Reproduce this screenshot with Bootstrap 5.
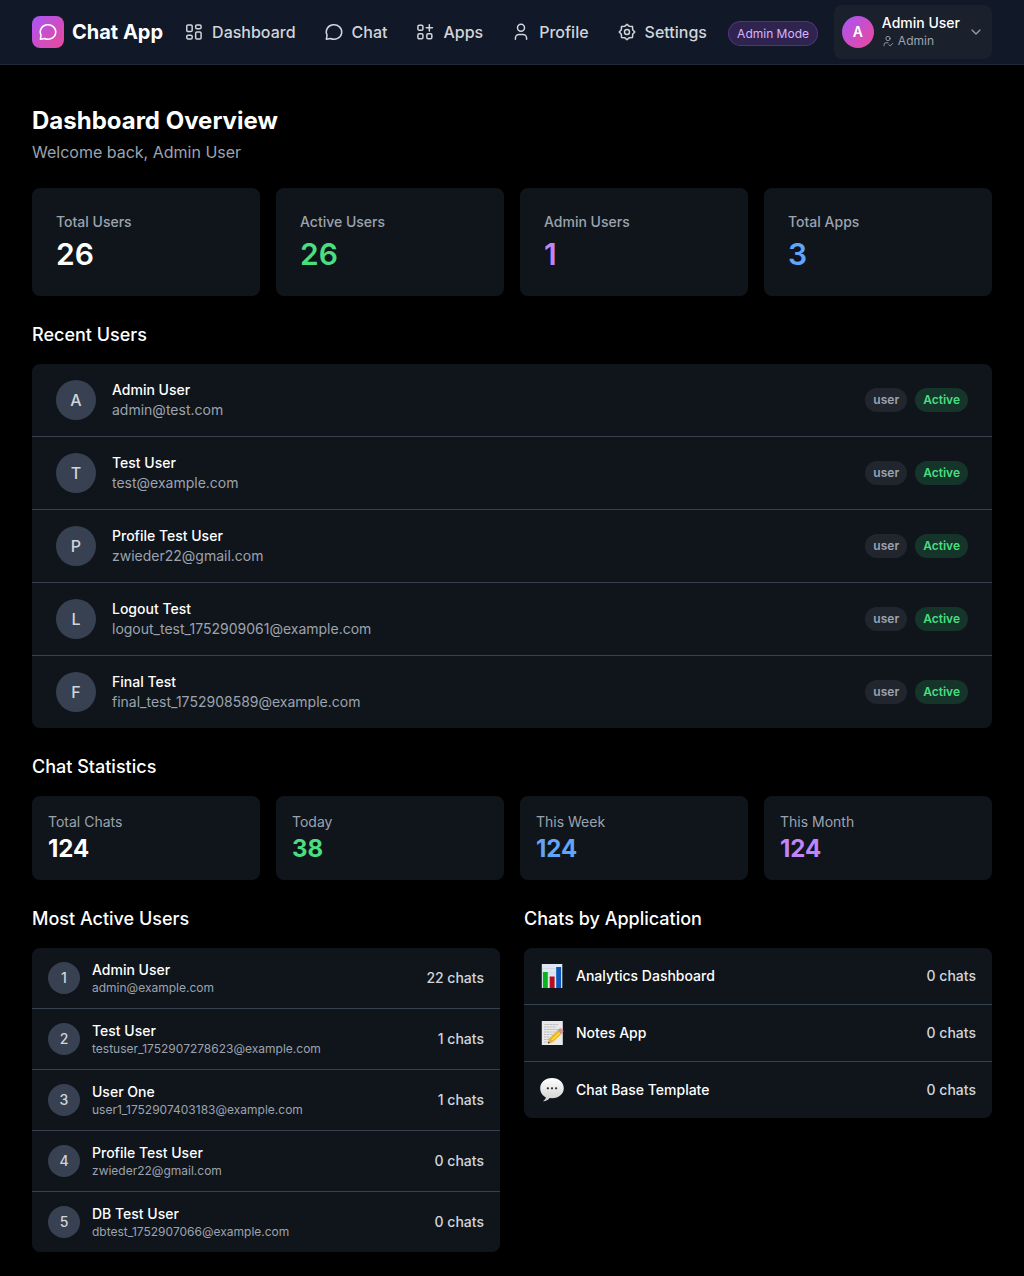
<!DOCTYPE html>
<html lang="en" data-bs-theme="dark">
<head>
<meta charset="utf-8">
<meta name="viewport" content="width=device-width, initial-scale=1">
<title>Chat App – Dashboard</title>
<link href="https://cdn.jsdelivr.net/npm/bootstrap@5.3.0/dist/css/bootstrap.min.css" rel="stylesheet">
<style>
body{background:#000;font-family:Inter,"Liberation Sans",sans-serif;color:#fff;font-size:16px;line-height:24px}
.topbar{background:#111827;border-bottom:1px solid #1f2937;height:65px}
.logo-box{width:32px;height:32px;border-radius:8px;background:linear-gradient(135deg,#a855f7,#ec4899)}
.brand-text{font-size:20px;line-height:28px;font-weight:700}
.main-nav{margin-left:9px;gap:4px}
.main-nav .nav-link{padding:8px 12px;gap:8px;color:#d1d5db;font-weight:500}
svg{flex:none;display:block}
.ico{fill:none;stroke:currentColor;stroke-width:1.8;stroke-linecap:round;stroke-linejoin:round}
.mode-pill{font-size:12px;line-height:17px;padding:3px 8px;border:1px solid rgba(168,85,247,.3);background:rgba(168,85,247,.2);color:#d8b4fe;border-radius:20px;margin-top:2px}
.user-btn{background:#1a202c;border-radius:8px;padding:8px;width:158px;height:54px;gap:8px}
.user-name{padding-bottom:2px}
.avatar-top{width:32px;height:32px;background:linear-gradient(135deg,#a855f7,#ec4899);font-size:14px;font-weight:600}
.t14{font-size:14px;line-height:20px}
.t12{font-size:12px;line-height:16px}
.dim{color:#9ca3af}
.soft{color:#d1d5db}
.page{padding:40px 32px 24px}
.page-title{font-size:24px;line-height:32px;font-weight:700;margin:0 0 3px}
.sec-title{font-size:18px;line-height:28px;font-weight:500;margin:0 0 15px;padding-top:1px}
.panel{background:#10151b;border-radius:8px}
.big-num{font-size:30px;line-height:36px;font-weight:600;margin-top:4px}
.mid-num{font-size:24px;line-height:31px;padding-top:1px;font-weight:700}
.c-green{color:#4ade80}.c-purple{color:#c084fc}.c-blue{color:#60a5fa}
.rows>*+*{border-top:1px solid #374151}
.row-lg{padding:16px 24px;gap:16px}
.row-sm{padding:12px 16px;gap:12px}
.disc{background:#374151;color:#d1d5db;flex:none;font-weight:500}
.disc-lg{width:40px;height:40px}
.disc-sm{width:32px;height:32px}
.tag{font-size:12px;line-height:16px;font-weight:600;padding:4px 8px;border-radius:12px}
.tag-user{background:#21262e;color:#9ca3af}
.tag-on{background:#15342a;color:#4ade80}
.mt-sec{margin-top:24px}
</style>
<script src="https://cdn.jsdelivr.net/npm/bootstrap@5.3.0/dist/js/bootstrap.bundle.min.js"></script>
</head>
<body>
<header class="topbar d-flex align-items-center px-4">
  <div class="d-flex align-items-center w-100 px-2">
    <div class="d-flex align-items-center gap-2">
      <span class="logo-box d-flex align-items-center justify-content-center">
        <svg class="ico" width="20" height="20" viewBox="0 0 24 24"><path d="M2.800 20.600l.9-4.700A9.300 8.700 0 1 1 7.900 19.800z"/></svg>
      </span>
      <span class="brand-text text-nowrap">Chat App</span>
    </div>
    <nav class="nav main-nav flex-nowrap">
      <a class="nav-link d-flex align-items-center" href="#"><svg class="ico" width="20" height="20" viewBox="0 0 24 24"><rect x="3.300" y="3.500" width="6.500" height="8" rx="1.500"/><rect x="14" y="3.500" width="6.500" height="4.500" rx="1.500"/><rect x="14" y="12" width="6.500" height="8.300" rx="1.500"/><rect x="3.300" y="15.800" width="6.500" height="4.500" rx="1.500"/></svg>Dashboard</a>
      <a class="nav-link d-flex align-items-center" href="#"><svg class="ico" width="20" height="20" viewBox="0 0 24 24"><path d="M2.800 20.600l.9-4.700A9.300 8.700 0 1 1 7.900 19.800z"/></svg>Chat</a>
      <a class="nav-link d-flex align-items-center" href="#"><svg class="ico" width="20" height="20" viewBox="0 0 24 24"><rect x="3.500" y="3.800" width="6" height="6" rx="1.500"/><rect x="3.500" y="14.200" width="6" height="6" rx="1.500"/><rect x="14.200" y="14.200" width="6" height="6" rx="1.500"/><path d="M17.200 3.300v7.400M13.500 7h7.400"/></svg>Apps</a>
      <a class="nav-link d-flex align-items-center" href="#"><svg class="ico" width="20" height="20" viewBox="0 0 24 24"><circle cx="12" cy="6.800" r="4.200"/><path d="M5.300 20.800v-1.500a4.300 4.300 0 0 1 4.300-4.300h4.800a4.300 4.300 0 0 1 4.300 4.300v1.500"/></svg>Profile</a>
      <a class="nav-link d-flex align-items-center" href="#"><svg class="ico" width="20" height="20" viewBox="0 0 24 24"><path d="M12 2.700L14.800 5.200L18.600 5.400L18.800 9.200L21.300 12L18.800 14.800L18.600 18.600L14.800 18.800L12 21.300L9.200 18.800L5.400 18.600L5.200 14.800L2.700 12L5.200 9.200L5.400 5.400L9.200 5.200z"/><circle cx="12" cy="12" r="3"/></svg>Settings</a>
    </nav>
    <div class="d-flex align-items-center gap-3 ms-auto">
      <span class="mode-pill text-nowrap">Admin Mode</span>
      <div class="user-btn d-flex align-items-center">
        <span class="avatar-top rounded-circle d-flex align-items-center justify-content-center">A</span>
        <span class="user-name text-nowrap">
          <span class="t14 fw-medium d-block">Admin User</span>
          <span class="t12 dim d-flex align-items-center gap-1"><svg class="ico" width="12" height="12" viewBox="0 0 24 24"><circle cx="12" cy="7" r="4.300"/><path d="M4 21.500v-2a4 4 0 0 1 4-4h4M13.500 19.200l2.700 2.500 5.300-5"/></svg>Admin</span>
        </span>
        <svg class="ico dim" width="16" height="16" viewBox="0 0 24 24"><path d="M6 9l6 6 6-6"/></svg>
      </div>
    </div>
  </div>
</header>

<main class="page">
  <h1 class="page-title">Dashboard Overview</h1>
  <p class="dim mb-4">Welcome back, Admin User</p>
  <div class="row g-3">
    <div class="col-3"><div class="panel p-4"><div class="t14 dim fw-medium">Total Users</div><div class="big-num">26</div></div></div>
    <div class="col-3"><div class="panel p-4"><div class="t14 dim fw-medium">Active Users</div><div class="big-num c-green">26</div></div></div>
    <div class="col-3"><div class="panel p-4"><div class="t14 dim fw-medium">Admin Users</div><div class="big-num c-purple">1</div></div></div>
    <div class="col-3"><div class="panel p-4"><div class="t14 dim fw-medium">Total Apps</div><div class="big-num c-blue">3</div></div></div>
  </div>

  <section class="mt-sec">
    <h2 class="sec-title">Recent Users</h2>
    <div class="panel rows">
      <div class="row-lg d-flex align-items-center"><span class="disc disc-lg rounded-circle d-flex align-items-center justify-content-center">A</span><div class="t14 flex-grow-1"><div class="fw-medium">Admin User</div><div class="dim">admin@test.com</div></div><div class="d-flex gap-2"><span class="tag tag-user">user</span><span class="tag tag-on">Active</span></div></div>
      <div class="row-lg d-flex align-items-center"><span class="disc disc-lg rounded-circle d-flex align-items-center justify-content-center">T</span><div class="t14 flex-grow-1"><div class="fw-medium">Test User</div><div class="dim">test@example.com</div></div><div class="d-flex gap-2"><span class="tag tag-user">user</span><span class="tag tag-on">Active</span></div></div>
      <div class="row-lg d-flex align-items-center"><span class="disc disc-lg rounded-circle d-flex align-items-center justify-content-center">P</span><div class="t14 flex-grow-1"><div class="fw-medium">Profile Test User</div><div class="dim">zwieder22@gmail.com</div></div><div class="d-flex gap-2"><span class="tag tag-user">user</span><span class="tag tag-on">Active</span></div></div>
      <div class="row-lg d-flex align-items-center"><span class="disc disc-lg rounded-circle d-flex align-items-center justify-content-center">L</span><div class="t14 flex-grow-1"><div class="fw-medium">Logout Test</div><div class="dim">logout_test_1752909061@example.com</div></div><div class="d-flex gap-2"><span class="tag tag-user">user</span><span class="tag tag-on">Active</span></div></div>
      <div class="row-lg d-flex align-items-center"><span class="disc disc-lg rounded-circle d-flex align-items-center justify-content-center">F</span><div class="t14 flex-grow-1"><div class="fw-medium">Final Test</div><div class="dim">final_test_1752908589@example.com</div></div><div class="d-flex gap-2"><span class="tag tag-user">user</span><span class="tag tag-on">Active</span></div></div>
    </div>
  </section>

  <section class="mt-sec">
    <h2 class="sec-title">Chat Statistics</h2>
    <div class="row g-3">
      <div class="col-3"><div class="panel p-3"><div class="t14 dim">Total Chats</div><div class="mid-num">124</div></div></div>
      <div class="col-3"><div class="panel p-3"><div class="t14 dim">Today</div><div class="mid-num c-green">38</div></div></div>
      <div class="col-3"><div class="panel p-3"><div class="t14 dim">This Week</div><div class="mid-num c-blue">124</div></div></div>
      <div class="col-3"><div class="panel p-3"><div class="t14 dim">This Month</div><div class="mid-num c-purple">124</div></div></div>
    </div>
  </section>

  <div class="row gx-4 mt-sec">
    <section class="col-6">
      <h2 class="sec-title">Most Active Users</h2>
      <div class="panel rows">
        <div class="row-sm d-flex align-items-center"><span class="disc disc-sm t14 rounded-circle d-flex align-items-center justify-content-center">1</span><div class="flex-grow-1"><div class="t14 fw-medium">Admin User</div><div class="t12 dim">admin@example.com</div></div><span class="t14 soft fw-medium">22 chats</span></div>
        <div class="row-sm d-flex align-items-center"><span class="disc disc-sm t14 rounded-circle d-flex align-items-center justify-content-center">2</span><div class="flex-grow-1"><div class="t14 fw-medium">Test User</div><div class="t12 dim">testuser_1752907278623@example.com</div></div><span class="t14 soft fw-medium">1 chats</span></div>
        <div class="row-sm d-flex align-items-center"><span class="disc disc-sm t14 rounded-circle d-flex align-items-center justify-content-center">3</span><div class="flex-grow-1"><div class="t14 fw-medium">User One</div><div class="t12 dim">user1_1752907403183@example.com</div></div><span class="t14 soft fw-medium">1 chats</span></div>
        <div class="row-sm d-flex align-items-center"><span class="disc disc-sm t14 rounded-circle d-flex align-items-center justify-content-center">4</span><div class="flex-grow-1"><div class="t14 fw-medium">Profile Test User</div><div class="t12 dim">zwieder22@gmail.com</div></div><span class="t14 soft fw-medium">0 chats</span></div>
        <div class="row-sm d-flex align-items-center"><span class="disc disc-sm t14 rounded-circle d-flex align-items-center justify-content-center">5</span><div class="flex-grow-1"><div class="t14 fw-medium">DB Test User</div><div class="t12 dim">dbtest_1752907066@example.com</div></div><span class="t14 soft fw-medium">0 chats</span></div>
      </div>
    </section>
    <section class="col-6">
      <h2 class="sec-title">Chats by Application</h2>
      <div class="panel rows">
        <div class="row-sm d-flex align-items-center">
          <svg width="24" height="32" viewBox="0 0 24 32"><rect x="1.800" y="4" width="20.500" height="24" fill="#dfe8f2"/><path d="M2 8.500h20M2 13h20M2 17.500h20M2 22h20" stroke="#c3cfdd" stroke-width=".5"/><rect x="2.900" y="12" width="4.900" height="16" fill="#08b51c"/><rect x="9.700" y="16.500" width="4.900" height="11.500" fill="#b80d1d"/><rect x="16.200" y="7" width="4.900" height="21" fill="#0b58bd"/></svg>
          <span class="t14 fw-medium flex-grow-1">Analytics Dashboard</span><span class="t14 soft fw-medium">0 chats</span></div>
        <div class="row-sm d-flex align-items-center">
          <svg width="24" height="32" viewBox="0 0 24 32"><rect x="1.800" y="4" width="21" height="24" fill="#e9e9e9"/><path d="M4.500 7.500h14M4 10h12M4 12.500h15M4 15h12M4 17.500h9M4 20h6M4 22.500h5M4 25h4" stroke="#aaa" stroke-width=".7" stroke-dasharray="2.200 .6"/><path d="M8 26.500l1.300-5.200L19 12.100l3.700 3.700-9.700 9.300z" fill="#eeb51c"/><path d="M11.500 22.500l9-8.700 1 1-9 8.800z" fill="#ffdd55"/><path d="M8 26.500l1.300-5.200 3.700 3.800z" fill="#dda967"/><path d="M8 26.500l.5-1.900 1.300 1.300z" fill="#333"/><path d="M17.600 13.400l1.500-1.400 3.700 3.700-1.500 1.500z" fill="#9ba8ad"/><path d="M18.800 12.200l.7-.7c1.500-1.400 5 1.900 3.600 3.600l-.7.7z" fill="#ef828c"/></svg>
          <span class="t14 fw-medium flex-grow-1">Notes App</span><span class="t14 soft fw-medium">0 chats</span></div>
        <div class="row-sm d-flex align-items-center">
          <svg width="24" height="32" viewBox="0 0 24 32"><defs><linearGradient id="bub" x2="0" y2="1"><stop stop-color="#fff"/><stop offset="1" stop-color="#cfcfcf"/></linearGradient></defs><path d="M12 4C5 4 .2 8.400.2 14.200c0 4.400 2.400 7.500 5.700 9.100-.3 1.700-1.400 3.200-3.100 4.200 3.500-.2 5.800-1.700 6.800-3.400l2.400.1c7 0 11.800-4.400 11.800-10S19 4 12 4z" fill="url(#bub)"/><circle cx="7.900" cy="14.300" r="1.150" fill="#333"/><circle cx="12" cy="14.300" r="1.150" fill="#333"/><circle cx="16.100" cy="14.300" r="1.150" fill="#333"/></svg>
          <span class="t14 fw-medium flex-grow-1">Chat Base Template</span><span class="t14 soft fw-medium">0 chats</span></div>
      </div>
    </section>
  </div>
</main>
</body>
</html>
